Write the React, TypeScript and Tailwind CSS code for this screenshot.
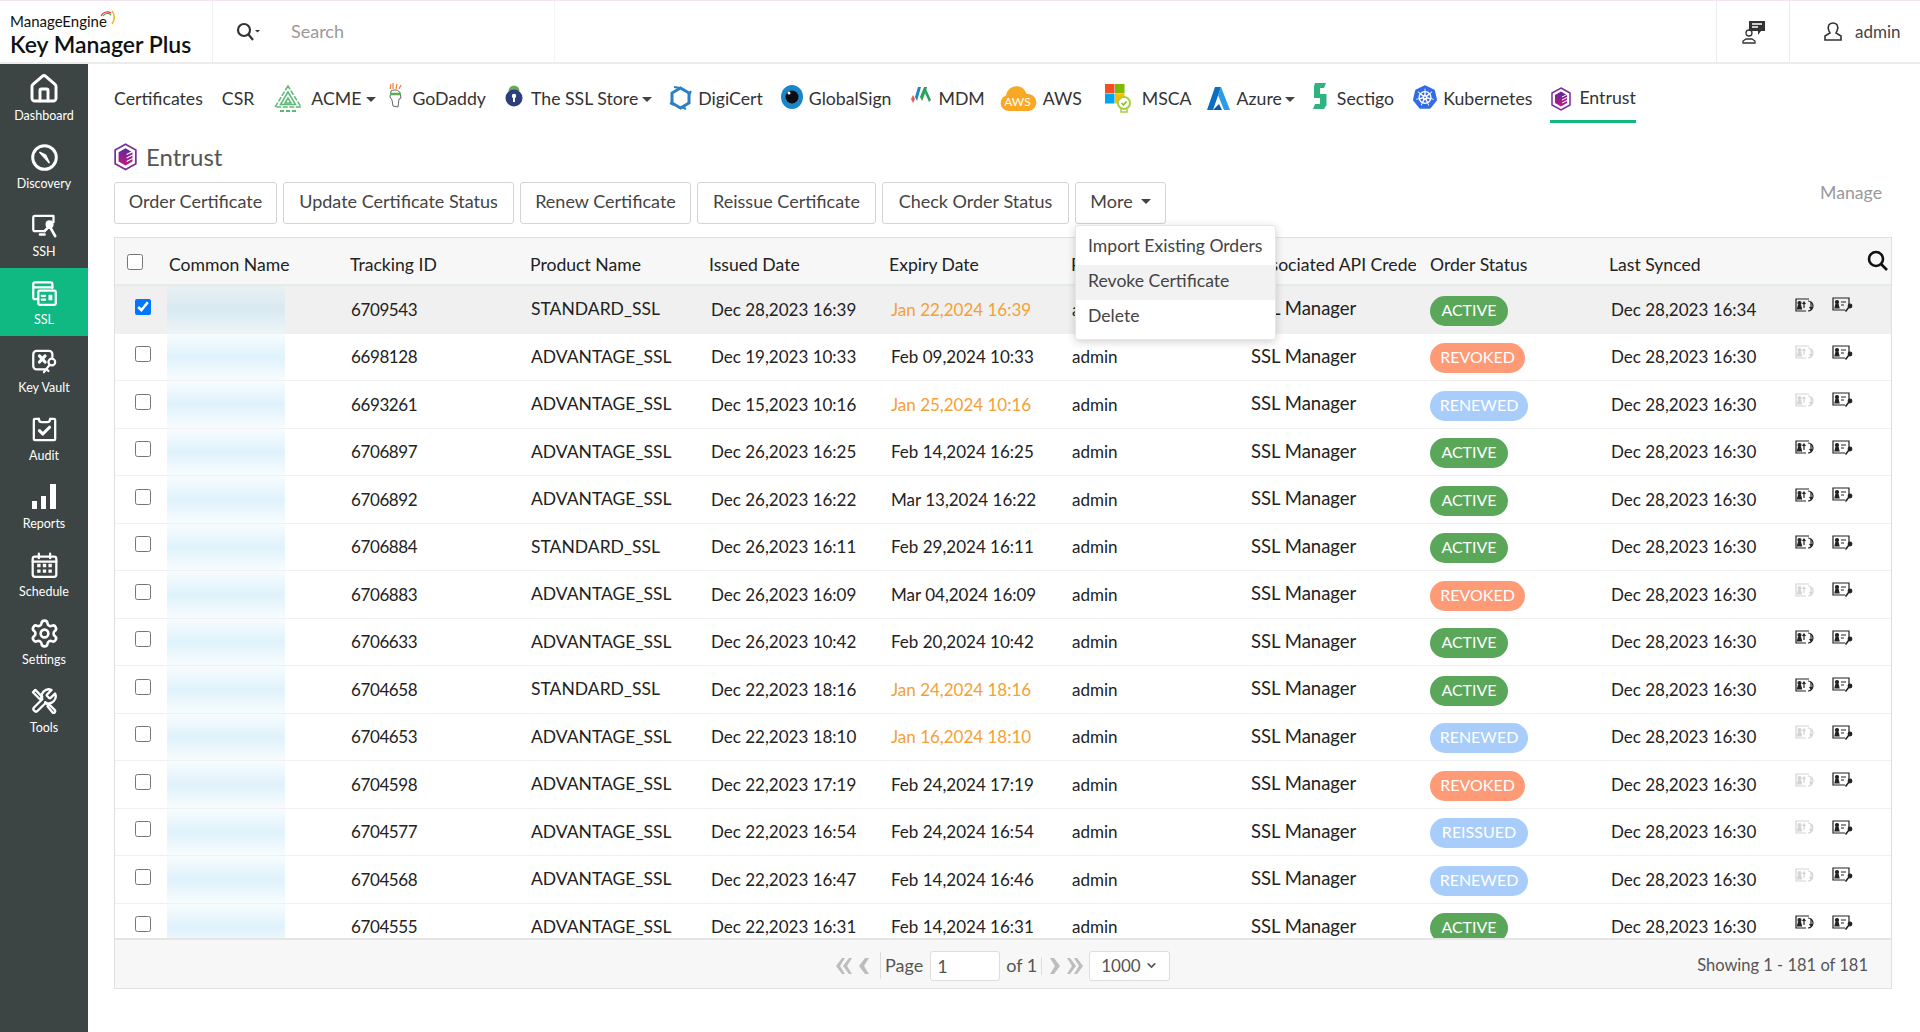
import { ChevronDown, House, Settings } from "lucide-react";
import { SiKubernetes } from "react-icons/si";
import type { ReactNode } from "react";

type Status = "ACTIVE" | "REVOKED" | "RENEWED" | "REISSUED";

const rows: { id: string; product: string; issued: string; expiry: string; soon?: boolean; status: Status; synced: string }[] = [
  { id: "6709543", product: "STANDARD_SSL", issued: "Dec 28,2023 16:39", expiry: "Jan 22,2024 16:39", soon: true, status: "ACTIVE", synced: "Dec 28,2023 16:34" },
  { id: "6698128", product: "ADVANTAGE_SSL", issued: "Dec 19,2023 10:33", expiry: "Feb 09,2024 10:33", status: "REVOKED", synced: "Dec 28,2023 16:30" },
  { id: "6693261", product: "ADVANTAGE_SSL", issued: "Dec 15,2023 10:16", expiry: "Jan 25,2024 10:16", soon: true, status: "RENEWED", synced: "Dec 28,2023 16:30" },
  { id: "6706897", product: "ADVANTAGE_SSL", issued: "Dec 26,2023 16:25", expiry: "Feb 14,2024 16:25", status: "ACTIVE", synced: "Dec 28,2023 16:30" },
  { id: "6706892", product: "ADVANTAGE_SSL", issued: "Dec 26,2023 16:22", expiry: "Mar 13,2024 16:22", status: "ACTIVE", synced: "Dec 28,2023 16:30" },
  { id: "6706884", product: "STANDARD_SSL", issued: "Dec 26,2023 16:11", expiry: "Feb 29,2024 16:11", status: "ACTIVE", synced: "Dec 28,2023 16:30" },
  { id: "6706883", product: "ADVANTAGE_SSL", issued: "Dec 26,2023 16:09", expiry: "Mar 04,2024 16:09", status: "REVOKED", synced: "Dec 28,2023 16:30" },
  { id: "6706633", product: "ADVANTAGE_SSL", issued: "Dec 26,2023 10:42", expiry: "Feb 20,2024 10:42", status: "ACTIVE", synced: "Dec 28,2023 16:30" },
  { id: "6704658", product: "STANDARD_SSL", issued: "Dec 22,2023 18:16", expiry: "Jan 24,2024 18:16", soon: true, status: "ACTIVE", synced: "Dec 28,2023 16:30" },
  { id: "6704653", product: "ADVANTAGE_SSL", issued: "Dec 22,2023 18:10", expiry: "Jan 16,2024 18:10", soon: true, status: "RENEWED", synced: "Dec 28,2023 16:30" },
  { id: "6704598", product: "ADVANTAGE_SSL", issued: "Dec 22,2023 17:19", expiry: "Feb 24,2024 17:19", status: "REVOKED", synced: "Dec 28,2023 16:30" },
  { id: "6704577", product: "ADVANTAGE_SSL", issued: "Dec 22,2023 16:54", expiry: "Feb 24,2024 16:54", status: "REISSUED", synced: "Dec 28,2023 16:30" },
  { id: "6704568", product: "ADVANTAGE_SSL", issued: "Dec 22,2023 16:47", expiry: "Feb 14,2024 16:46", status: "RENEWED", synced: "Dec 28,2023 16:30" },
  { id: "6704555", product: "ADVANTAGE_SSL", issued: "Dec 22,2023 16:31", expiry: "Feb 14,2024 16:31", status: "ACTIVE", synced: "Dec 28,2023 16:30" },
];

const badge: Record<Status, string> = {
  ACTIVE: "bg-[#5aa75a] w-[78px]",
  REVOKED: "bg-[#ff9a76] w-[95px]",
  RENEWED: "bg-[#a8cdfb] w-[98px]",
  REISSUED: "bg-[#a8cdfb] w-[98px]",
};

const cols = "grid grid-cols-[52px_181px_180px_180px_180px_181px_179px_179px_184px_184px_1fr]";

const actions = [
  { label: "Order Certificate", width: "w-[163px]" },
  { label: "Update Certificate Status", width: "w-[231px]" },
  { label: "Renew Certificate", width: "w-[171px]" },
  { label: "Reissue Certificate", width: "w-[179px]" },
  { label: "Check Order Status", width: "w-[187px]" },
];

function Sv({ children, w = 27, h = 27, box = "0 0 24 24" }: { children: ReactNode; w?: number; h?: number; box?: string }) {
  return (
    <svg width={w} height={h} viewBox={box} fill="none" stroke="currentColor" strokeWidth="2" strokeLinecap="round" strokeLinejoin="round">
      {children}
    </svg>
  );
}

const sideItems: { label: string; icon: ReactNode; active?: boolean }[] = [
  { label: "Dashboard", icon: <House size={32} strokeWidth={2.2} /> },
  {
    label: "Discovery",
    icon: (
      <Sv>
        <circle cx="12" cy="12" r="10.5" strokeWidth="2.6" />
        <path d="M8 7.5l8 9-3-6.500z" fill="currentColor" strokeWidth="1.5" />
      </Sv>
    ),
  },
  {
    label: "SSH",
    icon: (
      <Sv>
        <path d="M12 17H3.500a1.500 1.500 0 0 1-1.500-1.500V5a1.500 1.500 0 0 1 1.500-1.500h16.500V9" />
        <circle cx="16.500" cy="11" r="2.600" fill="currentColor" />
        <path d="M16 13l-4 4M17 13.500l4.500 8M12 20h-4" strokeWidth="2.400" />
      </Sv>
    ),
  },
  {
    label: "SSL",
    active: true,
    icon: (
      <Sv>
        <path d="M5 17H3.500A1.500 1.500 0 0 1 2 15.500v-12A1.500 1.500 0 0 1 3.500 2h14A1.500 1.500 0 0 1 19 3.500V7" />
        <path d="M2 6.500h17" />
        <rect x="6.500" y="9.500" width="15.500" height="12.500" rx="1.200" />
        <path d="M9.500 14h3M9.500 17.500h3" />
        <path d="M16 13.500h2.500v4H16z" fill="currentColor" strokeWidth="1" />
      </Sv>
    ),
  },
  {
    label: "Key Vault",
    icon: (
      <Sv>
        <path d="M13 19H5a3 3 0 0 1-3-3V5.500a3 3 0 0 1 3-3h11a3 3 0 0 1 3 3V8" />
        <path d="M7.500 7l5 5.500M12.500 7l-5 5.500" strokeWidth="2.800" />
        <circle cx="18.500" cy="12.500" r="3" />
        <path d="M16.500 15l-5 6.500M14 19l1.500 1.500" />
      </Sv>
    ),
  },
  {
    label: "Audit",
    icon: (
      <Sv>
        <path d="M7 2.500H3.500a1 1 0 0 0-1 1v17a1 1 0 0 0 1 1h17a1 1 0 0 0 1-1v-17a1 1 0 0 0-1-1H17" />
        <path d="M7 2.500c0 2 1 3 2.500 3h5c1.500 0 2.500-1 2.500-3" />
        <path d="M7.500 13l3 3 6-6" strokeWidth="2.800" />
      </Sv>
    ),
  },
  {
    label: "Reports",
    icon: (
      <svg width="26" height="26" viewBox="0 0 26 26" fill="currentColor">
        <rect x="1" y="17" width="5" height="8" />
        <rect x="10" y="12" width="5" height="13" />
        <rect x="19" y="0" width="6" height="25" />
      </svg>
    ),
  },
  {
    label: "Schedule",
    icon: (
      <Sv>
        <rect x="1.500" y="4" width="21" height="18" rx="2" />
        <path d="M7 1.500v4M17 1.500v4M1.500 8.500h21" />
        <path d="M5.500 12h3M10.500 12h3M15.500 12h3M5.500 17h3M10.500 17h3M15.500 17h3" strokeWidth="3" strokeLinecap="butt" />
      </Sv>
    ),
  },
  { label: "Settings", icon: <Settings size={31} strokeWidth={2} /> },
  {
    label: "Tools",
    icon: (
      <Sv w={28} h={28}>
        <path d="M14.700 6.300a1 1 0 0 0 0 1.400l1.600 1.600a1 1 0 0 0 1.400 0l3.770-3.770a6 6 0 0 1-7.940 7.940l-6.910 6.910a2.120 2.120 0 0 1-3-3l6.910-6.910a6 6 0 0 1 7.940-7.940l-3.760 3.760z" />
        <path d="M2.500 4.500l2-2 6 6-2 2z" />
        <path d="M14.500 14.500l-1.500-1.500" />
        <path d="M15 16.500l1.500-1.500 5 5a1.500 1.500 0 0 1-2 2z" />
      </Sv>
    ),
  },
];

function Caret({ className = "" }: { className?: string }) {
  return <span className={`inline-block border-x-[5px] border-t-[5px] border-x-transparent border-t-[#444] ${className}`} />;
}

function EntrustIcon({ size = 20 }: { size?: number }) {
  return (
    <svg width={size} height={size * 1.2} viewBox="0 0 20 24">
      <defs>
        <linearGradient id="ent" x1="0" y1="0" x2="0" y2="1">
          <stop offset="0" stopColor="#5b2a9d" />
          <stop offset="1" stopColor="#c2187e" />
        </linearGradient>
      </defs>
      <path d="M10 1l9 5v12l-9 5-9-5V6z" fill="none" stroke="#7b2d9b" strokeWidth="1.500" />
      <path d="M10 4.500l6 3.500v8l-6 3.500-6-3.500V8z" fill="url(#ent)" />
      <path d="M11 10l5-2.500M11 13l5-2.500M11 16l5-2.500" stroke="#fff" strokeWidth="1" />
    </svg>
  );
}

const tabs: { label: string; ml: string; gap: string; caret?: boolean; icon?: ReactNode; active?: boolean }[] = [
  { label: "Certificates", ml: "ml-0", gap: "" },
  { label: "CSR", ml: "ml-[19px]", gap: "" },
  {
    label: "ACME",
    ml: "ml-[20px]",
    gap: "gap-[9px]",
    caret: true,
    icon: (
      <svg width="28" height="30" viewBox="0 0 28 30" fill="none" stroke="#5cb874" strokeWidth="1.500">
        <path d="M14 2L1 23h26z" strokeDasharray="5 1.500" />
        <path d="M14 8l-7.500 12.500h15z" />
        <path d="M14 14l-3 5h6z" />
        <path d="M6 27h4M12 27h4M18 27h4" strokeWidth="1.800" />
      </svg>
    ),
  },
  {
    label: "GoDaddy",
    ml: "ml-[12px]",
    gap: "gap-[9px]",
    icon: (
      <svg width="15" height="26" viewBox="0 0 15 26" className="-mt-[6px]">
        <path d="M2 6l1-5M5 6V0M8 6l1-5M11 6l2-4" stroke="#ef7a3a" strokeWidth="1.200" />
        <path d="M3 8c4-2 8-1 9 2l1 5-2 1-1 8-5-1-1-6-2-3z" fill="#fff" stroke="#666" strokeWidth="1" />
        <path d="M2 11h11" stroke="#5cae4f" strokeWidth="2.500" />
      </svg>
    ),
  },
  {
    label: "The SSL Store",
    ml: "ml-[19px]",
    gap: "gap-[8px]",
    caret: true,
    icon: (
      <svg width="18" height="26" viewBox="0 0 18 26" className="-mt-[8px]">
        <path d="M3.500 9a5.500 5.500 0 0 1 11 0z" fill="#68ab5f" />
        <circle cx="9" cy="16" r="8.500" fill="#2c3f7c" />
        <circle cx="9" cy="14" r="2.200" fill="#fff" />
        <rect x="8" y="14" width="2" height="6" fill="#fff" />
      </svg>
    ),
  },
  {
    label: "DigiCert",
    ml: "ml-[17px]",
    gap: "gap-[6px]",
    icon: (
      <svg width="23" height="26" viewBox="0 0 23 26" fill="none" className="-mt-[3px]">
        <path d="M11.500 3L20 8v10l-8.500 5L3 18V8z" stroke="#2b7fc4" strokeWidth="3" />
        <path d="M5 2l6 1M22 6l-2 4M1 18l4 2M17 24l-4-2" stroke="#2b7fc4" strokeWidth="2" />
      </svg>
    ),
  },
  {
    label: "GlobalSign",
    ml: "ml-[18px]",
    gap: "gap-[6px]",
    icon: (
      <svg width="22" height="24" viewBox="0 0 22 24" className="-mt-[4px]">
        <ellipse cx="11" cy="12" rx="11" ry="12" fill="#1a86c8" />
        <circle cx="11" cy="12" r="6.500" fill="#0c0c12" />
        <circle cx="8" cy="8" r="1.500" fill="#fff" />
      </svg>
    ),
  },
  {
    label: "MDM",
    ml: "ml-[19px]",
    gap: "gap-[6px]",
    icon: (
      <svg width="22" height="20" viewBox="0 0 22 20" className="-mt-[6px]">
        <path d="M3 9l2 4-2 4-2-4z" fill="#ec5a52" />
        <path d="M8 1h3L7 15 5 11z" fill="#1a86c8" />
        <path d="M14 1h3l-1 4-4 10-2-4z" fill="#2aa05c" />
        <path d="M16 3l5 11-2 2-4-9z" fill="#2aa05c" />
      </svg>
    ),
  },
  {
    label: "AWS",
    ml: "ml-[14px]",
    gap: "gap-[6px]",
    icon: (
      <svg width="38" height="26" viewBox="0 0 38 26" className="-mt-[2px]">
        <path d="M9 26a8 8 0 0 1-2-15.500C8 4 14 0 20 1.500c4 1 6.500 4 7.500 7.500A8.500 8.500 0 0 1 30 26z" fill="#f9a825" />
        <text x="18.500" y="21" textAnchor="middle" fontSize="12" fill="#fff" fontFamily="Lato, sans-serif">AWS</text>
      </svg>
    ),
  },
  {
    label: "MSCA",
    ml: "ml-[23px]",
    gap: "gap-[11px]",
    icon: (
      <svg width="26" height="30" viewBox="0 0 26 30" className="-mt-[2px]">
        <rect x="0" y="1" width="9.500" height="9.500" fill="#f25022" />
        <rect x="10" y="1" width="9.500" height="9.500" fill="#7fba00" />
        <rect x="0" y="11" width="9.500" height="9.500" fill="#00a4ef" />
        <rect x="10" y="11" width="9.500" height="9.500" fill="#ffb900" />
        <circle cx="19" cy="20" r="6" fill="#fff" stroke="#a5cf3f" strokeWidth="2" />
        <path d="M16 26v3h6v-3" fill="none" stroke="#a5cf3f" strokeWidth="1.500" />
        <path d="M16.500 20l2 2 3-3.500" fill="none" stroke="#7fba00" strokeWidth="1.500" />
      </svg>
    ),
  },
  {
    label: "Azure",
    ml: "ml-[15px]",
    gap: "gap-[7px]",
    caret: true,
    icon: (
      <svg width="23" height="24" viewBox="0 0 23 24">
        <path d="M8 0h6L6 23H0z" fill="#0a6fc2" />
        <path d="M14 0l9 23h-6L11 8z" fill="#2e9be6" />
        <path d="M6 23l6-6 3 6z" fill="#0a5aa8" />
      </svg>
    ),
  },
  {
    label: "Sectigo",
    ml: "ml-[17px]",
    gap: "gap-[9px]",
    icon: (
      <svg width="16" height="28" viewBox="0 0 16 28" className="-mt-[6px]">
        <path d="M3 1h11l-2 5H8v6h6.500v11L12 27H1l2-5h5v-6H2V4z" fill="#2fb37f" />
      </svg>
    ),
  },
  {
    label: "Kubernetes",
    ml: "ml-[19px]",
    gap: "gap-[6px]",
    icon: <SiKubernetes size={24} color="#326ce5" className="-mt-[4px]" />,
  },
  { label: "Entrust", ml: "ml-[18px]", gap: "gap-[8px]", active: true, icon: <EntrustIcon /> },
];

function IdIcon({ muted }: { muted: boolean }) {
  const c = muted ? "#d4d4d4" : "#222";
  return (
    <svg width="21" height="14" viewBox="0 0 21 14" fill="none" stroke={c} strokeWidth="1.200">
      <path d="M11 13H1V1h13" />
      <circle cx="4.500" cy="5" r="1.500" fill={c} />
      <path d="M2.500 11l1-4h2l1 4z" fill={c} />
      <path d="M9 10V4M7.500 6L9 4l1.500 2M13 3a5 5 0 1 1 0 10" />
      <path d="M16 4v7M14.500 9l1.500 2 1.500-2" />
    </svg>
  );
}

function CertIcon() {
  return (
    <svg width="21" height="15" viewBox="0 0 21 15" fill="none" stroke="#222" strokeWidth="1.200">
      <path d="M13 13H1V1h16v6" />
      <circle cx="5" cy="5" r="1.500" fill="#222" />
      <path d="M3 11l1-4h2l1 4z" fill="#222" />
      <path d="M9 5h5M9 8h3" />
      <circle cx="18" cy="9" r="1.800" fill="#222" />
      <path d="M17 10l-3.500 4.500" strokeWidth="1.600" />
    </svg>
  );
}

function PageArrows({ flip }: { flip?: boolean }) {
  return (
    <svg width="38" height="18" viewBox="0 0 38 18" fill="#bdbdbd" className={flip ? "-scale-x-100" : ""}>
      <path d="M7 1h3L5 9l5 8H7L1 9z" />
      <path d="M14 1h3l-5 8 5 8h-3L8 9z" />
      <path d="M30 1h4l-5 8 5 8h-4l-6-8z" />
    </svg>
  );
}

export default function App() {
  return (
    <div className="flex h-screen flex-col overflow-hidden bg-white font-[Lato,sans-serif] text-[#222]">
      {/* Top bar */}
      <header className="flex h-[64px] shrink-0 border-t border-b-2 border-t-[#f3e4f1] border-b-[#ececec]">
        <div className="w-[213px] border-r border-[#f0f0f0] pl-[10px] pt-[10px]">
          <div className="flex items-start">
            <span className="text-[15px] leading-[20px] text-[#111]">ManageEngine</span>
            <svg width="16" height="18" viewBox="0 0 16 18" fill="none" strokeWidth="1.200" className="-ml-[7px] -mt-[1px]">
              <path d="M1 6a7 7 0 0 1 10-3" stroke="#d9363e" />
              <path d="M3 6a5 5 0 0 1 8-1" stroke="#3aa655" />
              <path d="M12 1c3 3 3 9 0 13" stroke="#f5b324" strokeWidth="1.600" />
            </svg>
          </div>
          <div className="text-[23px] font-semibold leading-[26px] text-[#111]">Key Manager Plus</div>
        </div>
        <div className="flex w-[342px] items-center border-r border-[#f4f4f4] pl-[23px]">
          <svg width="24" height="20" viewBox="0 0 24 20" fill="none" stroke="#333" strokeWidth="2.200">
            <circle cx="8" cy="8" r="6" />
            <path d="M12.500 12.500L17 18" />
            <path d="M19 8h5l-2.500 2.500z" fill="#333" stroke="none" />
          </svg>
          <span className="ml-[31px] text-[18px] text-[#9a9a9a]">Search</span>
        </div>
        <div className="flex-1" />
        <div className="flex w-[74px] items-center justify-center border-x border-[#ececec]">
          <svg width="25" height="24" viewBox="0 0 25 24" fill="none" stroke="#333" strokeWidth="1.300">
            <circle cx="8" cy="13" r="3" />
            <path d="M2 23v-2l3-2h6l3 2v2z" />
            <path d="M8 1h16v10h-4l-3 4v-4H8z" fill="#333" stroke="none" />
            <path d="M11 4h10M11 7h6" stroke="#fff" />
          </svg>
        </div>
        <div className="flex w-[130px] items-center pl-[33px]">
          <svg width="20" height="19" viewBox="0 0 20 19" fill="none" stroke="#333" strokeWidth="1.600">
            <path d="M6 9c-2-5 0-8 4-8s6 3 4 8l-1 2 5 3v4H2v-4l5-3z" />
          </svg>
          <span className="ml-[12px] text-[17px] text-[#444]">admin</span>
        </div>
      </header>

      <div className="flex min-h-0 flex-1">
        {/* Sidebar */}
        <nav className="w-[88px] shrink-0 bg-[#3c4543] text-white">
          {sideItems.map((item) => (
            <div key={item.label} className={`flex h-[68px] flex-col items-center pt-[11px] ${item.active ? "bg-[#10b981]" : ""}`}>
              <div className="flex h-[28px] items-center">{item.icon}</div>
              <span className="mt-[5px] text-[12.5px] leading-[16px]">{item.label}</span>
            </div>
          ))}
        </nav>

        {/* Content */}
        <main className="relative min-w-0 flex-1 pl-[26px] pr-[28px]">
          <div className="flex h-[60px] items-stretch text-[17.7px] text-[#333]">
            {tabs.map((t) => (
              <div key={t.label} className={`flex items-center ${t.ml} ${t.gap} ${t.active ? "mb-[1px] border-b-[3px] border-[#10b981] pl-[1px] pt-[13px]" : "pt-[10px]"}`}>
                {t.icon}
                <span className="whitespace-nowrap">{t.label}</span>
                {t.caret && <Caret className="-ml-[4px]" />}
              </div>
            ))}
          </div>

          <div className="flex h-[58px] items-center gap-[9px] pt-[8px] text-[24px] text-[#555]">
            <EntrustIcon size={23} />
            <span>Entrust</span>
          </div>

          <div className="flex h-[42px] gap-[6px] text-[18px] text-[#444]">
            {actions.map((b) => (
              <div key={b.label} className={`flex items-center justify-center rounded-[3px] border border-[#d4d4d4] pb-[3px] ${b.width}`}>
                {b.label}
              </div>
            ))}
            <div className="flex w-[91px] items-center justify-center gap-[8px] rounded-[3px] border border-[#d4d4d4] pb-[3px]">
              More
              <Caret />
            </div>
            <span className="ml-auto mr-[10px] self-start text-[17.7px] leading-[22px] text-[#999]">Manage</span>
          </div>

          {/* Table */}
          <div className="mt-[13px] border border-[#e0e0e0] text-[17px]">
            <div className={`${cols} relative h-[48px] items-center border-b-2 border-[#e3ece8] bg-[#f7f7f7] pt-[9px] text-[17.6px] text-[#222]`}>
              <div className="pl-[12px]">
                <input type="checkbox" readOnly className="-mt-[8px] block h-[16px] w-[16px]" />
              </div>
              <div className="pl-[2px]">Common Name</div>
              <div className="pl-[2px]">Tracking ID</div>
              <div className="pl-[2px]">Product Name</div>
              <div className="pl-[1px]">Issued Date</div>
              <div className="pl-[1px]">Expiry Date</div>
              <div className="pl-[2px]">Requested By</div>
              <div className="w-[168px] overflow-hidden whitespace-nowrap pl-[3px]">Associated API Credentials</div>
              <div className="pl-[3px]">Order Status</div>
              <div className="-ml-[2px]">Last Synced</div>
              <div />
              <svg width="22" height="22" viewBox="0 0 22 22" fill="none" stroke="#111" strokeWidth="2.600" className="absolute right-[2px] top-[12px]">
                <circle cx="9" cy="9" r="7" />
                <path d="M14 14l6 6" />
              </svg>
            </div>
            <div className="h-[652px] overflow-hidden">
              {rows.map((r, i) => (
                <div key={r.id} className={`${cols} h-[47.5px] items-center border-b border-[#f0f0f0] ${i === 0 ? "bg-[#f0f0f0]" : ""}`}>
                  <div className="pl-[20px]">
                    <input type="checkbox" readOnly checked={i === 0} className="-mt-[5px] block h-[16px] w-[16px]" />
                  </div>
                  <div className={`h-full w-[118px] ${i === 0 ? "bg-[linear-gradient(180deg,#e9f0f3_0%,#d8e9f1_50%,#eef5f8_100%)]" : "bg-[linear-gradient(180deg,#f7fcfe_0%,#dff2fb_50%,#f7fcfe_100%)]"}`} />
                  <div className="pl-[3px] tracking-[-0.4px]">{r.id}</div>
                  <div className="pl-[3px] text-[17.5px]">{r.product}</div>
                  <div className="pl-[3px]">{r.issued}</div>
                  <div className={`pl-[3px] ${r.soon ? "text-[#f5a034]" : ""}`}>{r.expiry}</div>
                  <div className="pl-[3px]">admin</div>
                  <div className="pl-[3px] text-[18.5px]">SSL Manager</div>
                  <div className="pl-[3px]">
                    <span className={`mt-[3px] flex h-[30px] items-center justify-center rounded-full pb-[2px] text-[16px] text-white ${badge[r.status]}`}>{r.status}</span>
                  </div>
                  <div>{r.synced}</div>
                  <div className="-mt-[9px] flex items-center gap-[16px]">
                    <IdIcon muted={r.status !== "ACTIVE"} />
                    <CertIcon />
                  </div>
                </div>
              ))}
            </div>
            <div className="flex h-[50px] items-center border-t-2 border-[#e5e5e5] bg-[#f7f7f7] pt-[3px] text-[18px] text-[#555]">
              <div className="ml-[720px] flex w-[44px] items-center">
                <PageArrows />
              </div>
              <span className="ml-[1px] border-l border-[#ddd] pl-[4px]">Page</span>
              <div className="ml-[7px] h-[30px] w-[70px] rounded-[3px] border border-[#ddd] bg-white pl-[6px] leading-[28px]">1</div>
              <span className="ml-[6px]">of 1</span>
              <div className="ml-[4px] flex w-[46px] items-center border-l border-[#ddd] pl-[4px]">
                <PageArrows flip />
              </div>
              <div className="ml-[2px] flex h-[30px] w-[81px] items-center justify-between rounded-[3px] border border-[#ddd] bg-white px-[11px] text-[17px]">
                1000
                <ChevronDown size={13} strokeWidth={3} />
              </div>
              <span className="ml-auto mr-[23px] text-[16.5px]">Showing 1 - 181 of 181</span>
            </div>
          </div>

          {/* More menu */}
          <div className="absolute left-[987px] top-[161px] w-[201px] rounded-[3px] border border-[#e6e6e6] bg-white py-[4px] text-[17.6px] text-[#444] shadow-[0_2px_8px_rgba(0,0,0,0.18)]">
            <div className="flex h-[35px] items-center whitespace-nowrap px-[12px] pb-[3px]">Import Existing Orders</div>
            <div className="flex h-[35px] items-center bg-[#f2f2f2] px-[12px] pb-[3px]">Revoke Certificate</div>
            <div className="flex h-[35px] items-center px-[12px] pb-[3px]">Delete</div>
          </div>
        </main>
      </div>
    </div>
  );
}
